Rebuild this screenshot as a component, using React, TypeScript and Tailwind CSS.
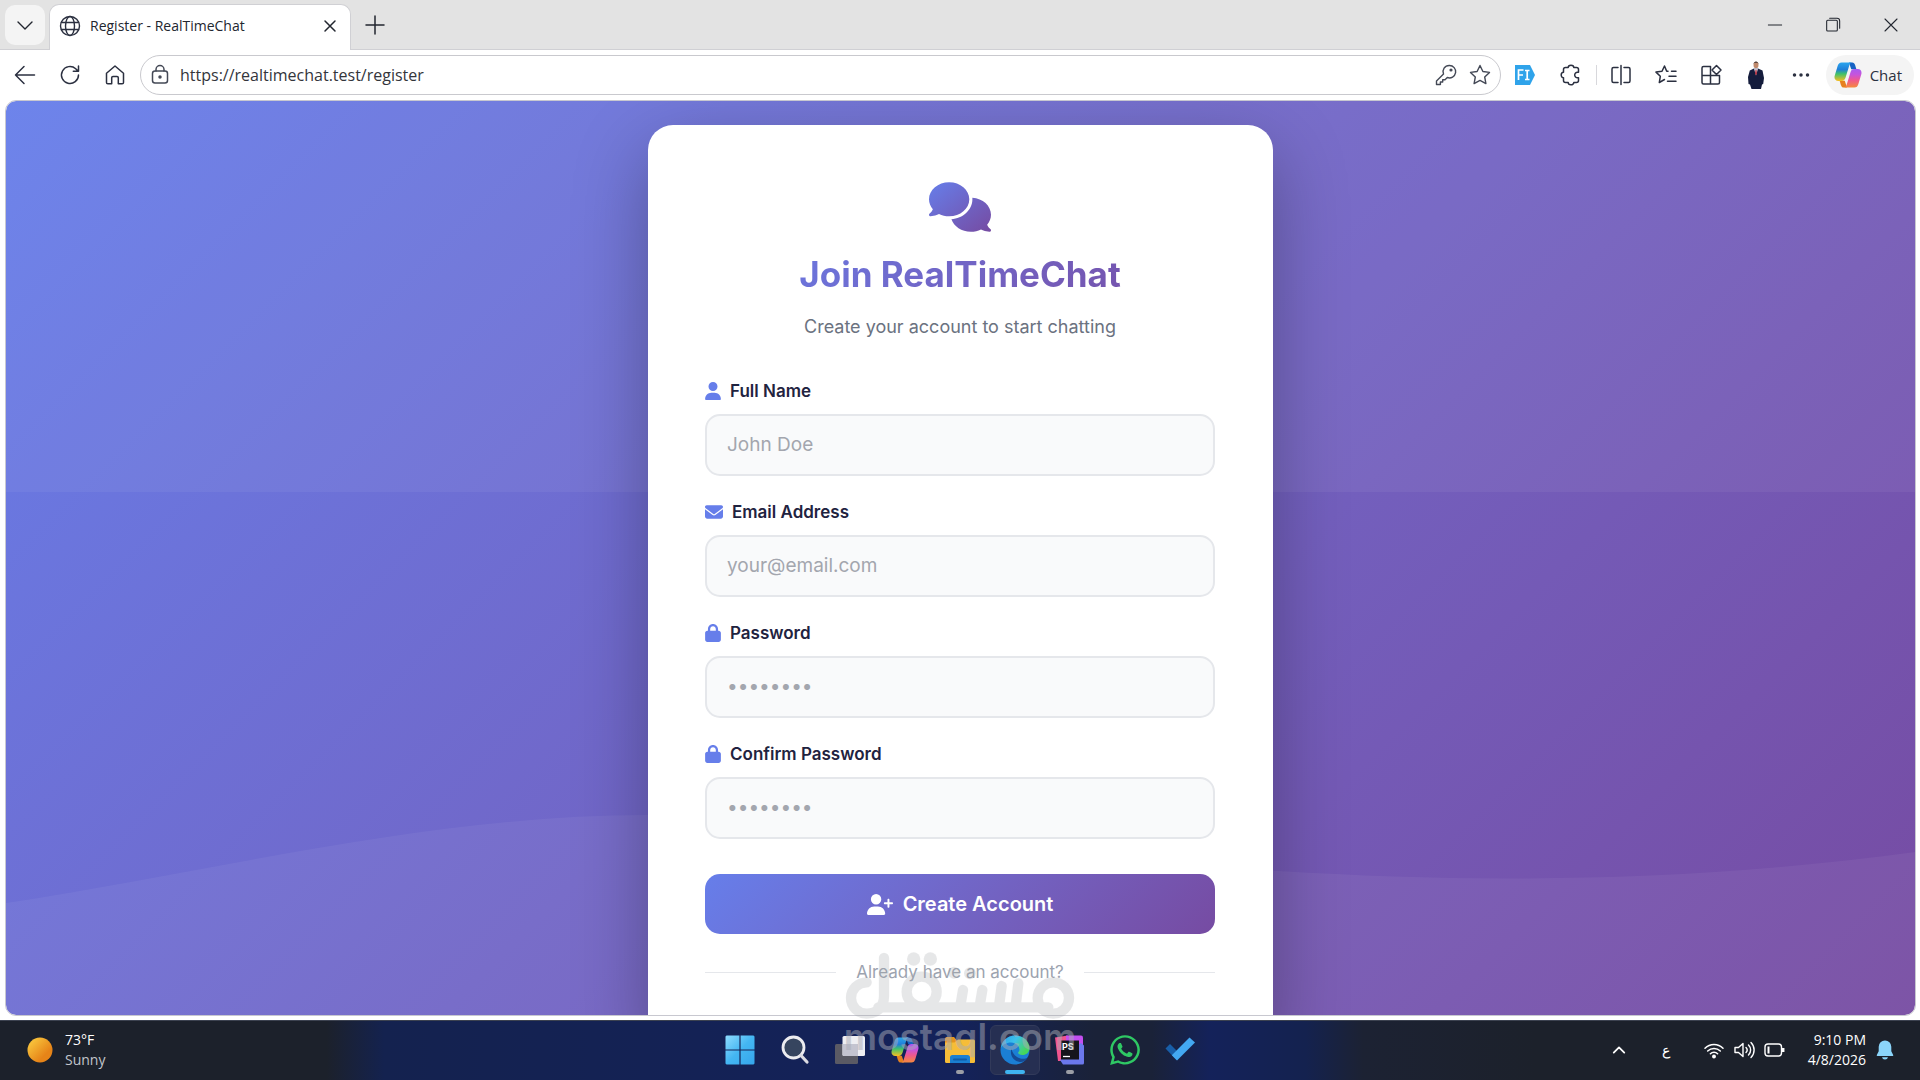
import type { ReactNode } from "react";
import { FaComments, FaUser, FaEnvelope, FaLock, FaUserPlus, FaWhatsapp } from "react-icons/fa6";

const UI = "font-['Open_Sans','Noto_Sans',sans-serif]";

function Stroke({ children, size = 24, width = 1.5, className = "" }: { children: ReactNode; size?: number; width?: number; className?: string }) {
  return (
    <svg width={size} height={size} viewBox="0 0 24 24" fill="none" stroke="currentColor" strokeWidth={width} strokeLinecap="round" strokeLinejoin="round" className={className} aria-hidden="true">
      {children}
    </svg>
  );
}

function CopilotLogo({ size }: { size: number }) {
  return (
    <svg width={size} height={size} viewBox="0 0 28 28" aria-hidden="true">
      <defs>
        <linearGradient id="cp-left" x1="0" y1="0" x2="0" y2="1">
          <stop offset="0" stopColor="#2aa5ee" />
          <stop offset=".38" stopColor="#1f7fd8" />
          <stop offset=".62" stopColor="#3fc26a" />
          <stop offset="1" stopColor="#f5bd22" />
        </linearGradient>
        <linearGradient id="cp-right" x1="0" y1="0" x2="0" y2="1">
          <stop offset="0" stopColor="#a85cf0" />
          <stop offset=".3" stopColor="#c654dc" />
          <stop offset=".6" stopColor="#f0588f" />
          <stop offset="1" stopColor="#f58a3c" />
        </linearGradient>
      </defs>
      <path d="M15 1.5h3.2c1.6 0 2.3 1 2.9 2.6l1.3 4.2h-5.2z" fill="#1763c4" />
      <path d="M13 26.500h-3.200c-1.600 0-2.300-1-2.900-2.600L5.600 19.700h5.200z" fill="#e6801f" />
      <path d="M7.600 1.500h10.200c-1.500.4-2.100 1.500-2.600 3.200l-3.700 12.100c-.7 2.100-1.700 3.100-3.900 3.100H4.300C1.300 19.900-.1 17.600.7 14.700L3.700 4.800c.6-2 1.700-3.300 3.900-3.300z" fill="url(#cp-left)" />
      <path d="M20.400 26.500H10.200c1.500-.4 2.100-1.500 2.600-3.200l3.700-12.100c.7-2.100 1.700-3.100 3.900-3.100h3.300c3 0 4.400 2.300 3.600 5.200l-3 9.900c-.6 2-1.700 3.300-3.900 3.300z" fill="url(#cp-right)" />
    </svg>
  );
}

function IconButton({ label, className = "", children }: { label: string; className?: string; children: ReactNode }) {
  return (
    <button type="button" aria-label={label} className={`flex h-10 w-[45px] shrink-0 items-center justify-center text-[#2b3040] ${className}`}>
      {children}
    </button>
  );
}

function TabStrip() {
  return (
    <div className="flex h-[50px] shrink-0 items-end border-b border-[#d0d0d4] bg-[#e3e3e3]">
      <button type="button" aria-label="Tab actions" className="mb-1 ml-[5px] flex h-10 w-10 items-center justify-center rounded-[10px] bg-[#f4f4f4] text-[#22262f]">
        <Stroke size={24} width={1.4}><path d="M5 9l7 7 7-7" /></Stroke>
      </button>
      <div className="-mb-px ml-1 flex h-[46px] w-[302px] items-center rounded-t-[10px] border border-b-0 border-[#d0d0d4] bg-white px-2 pb-1">
        <Stroke size={24} width={1.4} className="text-[#2b3040]">
          <circle cx="12" cy="12" r="9.500" />
          <ellipse cx="12" cy="12" rx="4.500" ry="9.500" />
          <path d="M3.500 8.500h17M3.500 15.500h17" />
        </Stroke>
        <span className="ml-2 flex-1 text-sm text-[#22262f]">Register - RealTimeChat</span>
        <button type="button" aria-label="Close tab" className="flex h-6 w-6 items-center justify-center text-[#22262f]">
          <Stroke size={20} width={1.8}><path d="M6 6l12 12M18 6L6 18" /></Stroke>
        </button>
      </div>
      <button type="button" aria-label="New tab" className="mb-1 ml-1 flex h-10 w-10 items-center justify-center text-[#22262f]">
        <Stroke size={24} width={1.5}><path d="M12 3v18M3 12h18" /></Stroke>
      </button>
      <div className="flex-1" />
      <div className="flex self-stretch text-[#22262f]">
        <button type="button" aria-label="Minimize" className="flex w-[58px] items-center justify-center"><Stroke size={16} width={1.500}><path d="M2 12h20" /></Stroke></button>
        <button type="button" aria-label="Restore" className="flex w-[58px] items-center justify-center">
          <Stroke size={16} width={1.600}><rect x="2.500" y="5" width="16" height="16" rx="1.500" /><path d="M7 2h11a4 4 0 0 1 4 4v11" /></Stroke>
        </button>
        <button type="button" aria-label="Close" className="flex w-[58px] items-center justify-center"><Stroke size={16} width={1.600}><path d="M3 3l18 18M21 3L3 21" /></Stroke></button>
      </div>
    </div>
  );
}

function Toolbar() {
  return (
    <div className="flex h-[51px] shrink-0 items-center bg-white pr-[6px] pb-px pl-[2px]">
      <IconButton label="Back"><Stroke><path d="M21.500 12H2.500M11 3.500L2.500 12l8.500 8.500" /></Stroke></IconButton>
      <IconButton label="Refresh"><Stroke><path d="M20.500 12a8.500 8.500 0 1 1-2.800-6.300L20 8M20.500 3v5.200h-5.200" /></Stroke></IconButton>
      <IconButton label="Home"><Stroke><path d="M3.500 10.200L12 3l8.500 7.200v9.300a1.300 1.300 0 0 1-1.300 1.300h-3.900v-6a1.300 1.300 0 0 0-1.300-1.300h-4a1.300 1.300 0 0 0-1.300 1.300v6H4.800a1.300 1.300 0 0 1-1.300-1.300z" /></Stroke></IconButton>
      <div className="ml-[3px] flex h-10 flex-1 items-center rounded-full border border-[#c9c9ce] bg-white pl-[7px]">
        <Stroke size={24} className="text-[#444956]">
          <rect x="4.500" y="8" width="15" height="12" rx="2.500" /><path d="M8 8V6.500a4 4 0 0 1 8 0V8" /><circle cx="12" cy="14" r="1" fill="currentColor" />
        </Stroke>
        <input aria-label="Address" defaultValue="https://realtimechat.test/register" className="ml-2 min-w-0 flex-1 bg-transparent text-[16px] text-[#33353b] outline-none" />
        <button type="button" aria-label="Saved passwords" className="flex h-8 w-[34px] items-center justify-center text-[#444956]">
          <Stroke size={24} width={1.400}><path d="M15.300 2.500a6.200 6.200 0 1 1-2 12l-2.300 2.200H8.700V19H6.400v2.500H2.500v-3.400l7-7a6.200 6.200 0 0 1 5.800-8.600z" /><circle cx="17" cy="7" r=".9" fill="currentColor" /></Stroke>
        </button>
        <button type="button" aria-label="Add to favorites" className="mr-[3px] flex h-8 w-[34px] items-center justify-center text-[#444956]">
          <Stroke size={24} width={1.400}><path d="M12 2.500l2.900 6 6.600.9-4.800 4.600 1.200 6.600-5.900-3.200-5.900 3.200 1.200-6.600-4.800-4.600 6.600-.9z" /></Stroke>
        </button>
      </div>
      <IconButton label="Form filler" className="mr-px ml-[2px]">
        <svg width="20" height="20" viewBox="0 0 20 20" aria-hidden="true">
          <path d="M0 0h15l5 10-5 10H0z" fill="#2fa3ea" />
          <path d="M3.500 15V5h5M3.500 10h4.500M10 5.500h4.500M10 14.500h4.500M12.200 5.500v9" stroke="#fff" strokeWidth="1.700" fill="none" />
        </svg>
      </IconButton>
      <IconButton label="Extensions">
        <Stroke><path d="M6.500 4.500H9.200a2.800 2.300 0 0 1 5.600 0H17.500a2 2 0 0 1 2 2v2.700h-1a2.800 2.800 0 1 0 0 5.600h1v2.700a2 2 0 0 1-2 2h-2.700a2.800 2.300 0 0 1-5.600 0H6.500a2 2 0 0 1-2-2v-2.700a2.300 2.800 0 0 1 0-5.600V6.500a2 2 0 0 1 2-2z" /></Stroke>
      </IconButton>
      <div className="mx-[2px] h-5 w-px bg-[#d8d8dc]" />
      <IconButton label="Split screen">
        <Stroke><path d="M12 2.500v19M9 4.500H4.500a1.500 1.500 0 0 0-1.500 1.500v12a1.500 1.500 0 0 0 1.500 1.500H9M15 4.500h4.500A1.500 1.500 0 0 1 21 6v12a1.500 1.500 0 0 1-1.500 1.500H15" /></Stroke>
      </IconButton>
      <IconButton label="Favorites">
        <Stroke><path d="M14 8.200h-1.300L10.500 3 8 8.300l-6 .8 4.300 4.200-1 6.200 5.200-3M22 8.200h-4.500M15 13.200h7M13.500 18.200H22" /></Stroke>
      </IconButton>
      <IconButton label="Apps">
        <Stroke><path d="M11.500 3.500H4.500A1.500 1.500 0 0 0 3 5v14.500A1.500 1.500 0 0 0 4.500 21H19a1.500 1.500 0 0 0 1.500-1.500v-7H3M11.500 3.500V21" /><path d="M17.500 2.500l4.500 4.500-4.500 4.500L13 7z" /></Stroke>
      </IconButton>
      <IconButton label="Profile">
        <svg width="18" height="28" viewBox="0 0 18 28" aria-hidden="true">
          <ellipse cx="9" cy="4" rx="2.500" ry="3.300" fill="#c08a6c" />
          <path d="M6.500 3.500C6.500-.5 11.500-.5 11.500 3.500L10.800 1.800H7.200z" fill="#3a3030" />
          <path d="M7 7.500h4l4.500 2L17 17l-.8 6-1.200.5-1 4.500H4.500L3 23.500 1.500 23 1 16l1.800-6.500z" fill="#141c3c" />
          <path d="M7 7.500h4l-2 7z" fill="#e8ecf4" />
          <path d="M8.500 8.500h1l.5 4-1 2-1-2z" fill="#b03040" />
        </svg>
      </IconButton>
      <IconButton label="Settings and more"><Stroke><g fill="currentColor"><circle cx="5.500" cy="12" r="1" /><circle cx="12" cy="12" r="1" /><circle cx="18.500" cy="12" r="1" /></g></Stroke></IconButton>
      <button type="button" className="ml-[2px] flex h-10 items-center gap-2 rounded-full bg-[#f4f4f4] pr-3 pl-2 text-[15px] text-[#2b3040]">
        <CopilotLogo size={28} />
        Chat
      </button>
    </div>
  );
}

const fields = [
  { id: "name", label: "Full Name", placeholder: "John Doe", type: "text", icon: FaUser, iconWidth: "w-4" },
  { id: "email", label: "Email Address", placeholder: "your@email.com", type: "email", icon: FaEnvelope, iconWidth: "w-[18px]" },
  { id: "password", label: "Password", placeholder: "••••••••", type: "password", icon: FaLock, iconWidth: "w-4" },
  { id: "confirm", label: "Confirm Password", placeholder: "••••••••", type: "password", icon: FaLock, iconWidth: "w-4" },
];

function RegisterCard() {
  return (
    <section className="relative w-[625px] max-w-full shrink-0 self-start rounded-[25px] bg-white pt-[57px] pr-[58px] pb-14 pl-[57px] shadow-[0_25px_75px_rgba(0,0,0,0.3)]">
      <header className="flex flex-col items-center text-center">
        <svg width="0" height="0" className="absolute" aria-hidden="true">
          <linearGradient id="brand" x1="0" y1="0" x2="1" y2="1">
            <stop offset="0" stopColor="#667eea" />
            <stop offset="1" stopColor="#764ba2" />
          </linearGradient>
        </svg>
        <FaComments fill="url(#brand)" className="h-[50px] w-[62px]" aria-hidden="true" />
        <h1 className="mt-[21px] self-stretch bg-linear-135 from-[#667eea] to-[#764ba2] bg-clip-text text-[35px] leading-[42px] font-bold text-transparent">Join RealTimeChat</h1>
        <p className="mt-[18px] text-[18px] leading-[27px] text-[#6b7280]">Create your account to start chatting</p>
      </header>
      <form className="mt-[38px]">
        <div className="flex flex-col gap-[23px]">
          {fields.map(({ id, label, placeholder, type, icon: Icon, iconWidth }) => (
            <div key={id}>
              <label htmlFor={id} className="flex items-center gap-[9px] text-[17px] leading-[26px] font-semibold text-[#1f2340]">
                <Icon className={`h-[18px] text-[#667eea] ${iconWidth}`} aria-hidden="true" />
                {label}
              </label>
              <input id={id} type={type} placeholder={placeholder} className="mt-[10px] h-[62px] w-full rounded-[15px] border-2 border-[#e5e7eb] bg-[#f9fafb] px-5 pb-[2px] text-[19px] text-[#1f2340] outline-none placeholder:text-[#a3a6ae]" />
            </div>
          ))}
        </div>
        <button type="submit" className="mt-[35px] flex h-[60px] w-full items-center justify-center gap-[10px] rounded-[15px] bg-linear-135 from-[#667eea] to-[#764ba2] text-[20px] font-semibold text-white">
          <FaUserPlus className="h-[21px] w-[26px]" aria-hidden="true" />
          Create Account
        </button>
      </form>
      <div className="mt-[25px] flex items-center gap-5 text-[17px] leading-[26px] text-[#9ca3af]">
        <span className="h-px flex-1 bg-[#e5e7eb]" />
        Already have an account?
        <span className="h-px flex-1 bg-[#e5e7eb]" />
      </div>
    </section>
  );
}

function PageView() {
  return (
    <main className="relative mr-[5px] mb-[5px] ml-[6px] flex min-h-0 flex-1 justify-center overflow-hidden rounded-[10px] bg-linear-135 from-[#667eea] to-[#764ba2] pt-6 font-['Inter',sans-serif] outline-1 outline-[#c8c8d0]">
      <svg className="absolute inset-0 h-full w-full" viewBox="0 0 1908 914" preserveAspectRatio="none" aria-hidden="true">
        <path d="M0 0H1908V391H0z" fill="#fff" fillOpacity=".05" />
        <path d="M0 802C210 770 424 714 640 714C850 714 1060 754 1273 770C1470 782 1680 782 1908 751V914H0z" fill="#fff" fillOpacity=".05" />
      </svg>
      <RegisterCard />
    </main>
  );
}

function EdgeLogo() {
  return (
    <svg width="30" height="30" viewBox="0 0 30 30" aria-hidden="true">
      <defs>
        <linearGradient id="edge-top" x1="0" y1="0" x2="1" y2=".5">
          <stop offset="0" stopColor="#2b9fe6" /><stop offset=".5" stopColor="#3cc0ec" /><stop offset="1" stopColor="#45d65a" />
        </linearGradient>
      </defs>
      <circle cx="15" cy="15" r="14.500" fill="#1b7fd4" />
      <path d="M.8 13C2 5.500 8 .5 15 .5c8.500 0 14.500 6 14.500 12.500 0 4.500-3.400 7-7 7-3 0-4.700-1.300-4.400-2.400 1-1 1.500-2 1.300-3.700C19 10.500 15.500 7.500 11 7.500 6.500 7.500 2.500 9.800.8 13z" fill="url(#edge-top)" />
      <path d="M11.500 13.500c-2 5.500 1 12.500 8.500 13.500 3.500 0 6.500-2 8-4.500-3.500 2-8 1.500-11-.5-3.500-2.300-5-5.200-5.500-8.500z" fill="#154a94" />
    </svg>
  );
}

function TaskbarApps() {
  const item = "relative flex h-[50px] w-[50px] items-center justify-center rounded-md";
  return (
    <nav aria-label="Taskbar apps" className="flex gap-[5px]">
      <button type="button" aria-label="Start" className={item}>
        <svg width="30" height="30" viewBox="0 0 30 30" aria-hidden="true">
          <defs><linearGradient id="win" x1="0" y1="0" x2="1" y2="1"><stop offset="0" stopColor="#8fdcff" /><stop offset=".5" stopColor="#44b6f2" /><stop offset="1" stopColor="#35a6ec" /></linearGradient></defs>
          <path d="M1.500.5H14.400V14.400H.5V1.500zM15.600.5h12.900l1 1v12.900H15.600zM.5 15.600h13.900v13.900H1.500l-1-1zM15.600 15.600h13.900v12.900l-1 1H15.600z" fill="url(#win)" />
        </svg>
      </button>
      <button type="button" aria-label="Search" className={item}>
        <svg width="30" height="30" viewBox="0 0 30 30" fill="none" aria-hidden="true">
          <circle cx="13.500" cy="12.500" r="10.500" fill="#36455f" stroke="#ececf0" strokeWidth="2.800" />
          <path d="M21 20.500l6 6.500" stroke="#dcdce2" strokeWidth="3.200" strokeLinecap="round" />
        </svg>
      </button>
      <button type="button" aria-label="Task view" className={item}>
        <svg width="30" height="30" viewBox="0 0 30 30" aria-hidden="true">
          <rect x="0" y="9" width="23" height="20" rx="1.500" fill="#5a5a64" />
          <rect x="7.500" y="1" width="22.500" height="20" rx="1.500" fill="#eeeef2" />
          <path d="M7.500 9H23v12H9a1.500 1.500 0 0 1-1.500-1.500z" fill="#c4c4d0" />
        </svg>
      </button>
      <button type="button" aria-label="Copilot" className={item}><CopilotLogo size={28} /></button>
      <button type="button" aria-label="File Explorer" className={item}>
        <svg width="30" height="30" viewBox="0 0 30 30" aria-hidden="true">
          <path d="M0 4a2 2 0 0 1 2-2h7l3 3.500V12H0z" fill="#e6951e" />
          <path d="M0 7.500h9.500L13 4.500h15.500A1.500 1.500 0 0 1 30 6v20.500a1.500 1.500 0 0 1-1.500 1.500h-27A1.500 1.500 0 0 1 0 26.500z" fill="#f6bd38" />
          <path d="M5 28v-5.500A2.500 2.500 0 0 1 7.500 20h15a2.500 2.500 0 0 1 2.500 2.500V28z" fill="#1a7fd2" />
          <path d="M9 24.500h12" stroke="#0f5ca8" strokeWidth="2" strokeLinecap="round" />
        </svg>
        <span className="absolute bottom-px h-1 w-2 rounded-full bg-[#9b9ea6]" />
      </button>
      <button type="button" aria-label="Edge" className={`${item} border border-[#323a5a] bg-[#262f52]`}>
        <EdgeLogo />
        <span className="absolute bottom-0 h-1 w-5 rounded-full bg-[#3fb4f0]" />
      </button>
      <button type="button" aria-label="PhpStorm" className={item}>
        <svg width="32" height="30" viewBox="0 0 32 30" aria-hidden="true">
          <path d="M1 2.500L14 .5l5 13L7 26H4z" fill="#f0548e" />
          <path d="M12 .5h15a2 2 0 0 1 2 2V20L12 12z" fill="#c44ff0" />
          <path d="M27 8l3 2.500V28a1.500 1.500 0 0 1-1.500 1.500H9L6 25z" fill="#6b78ec" />
          <rect x="7" y="5.500" width="18" height="19" fill="#15151c" />
          <text x="8" y="15" fill="#fff" fontSize="9" fontWeight="700" className="font-['Inter',sans-serif]">PS</text>
          <path d="M9 21.500h7" stroke="#fff" strokeWidth="1.300" />
        </svg>
        <span className="absolute bottom-px h-1 w-2 rounded-full bg-[#9b9ea6]" />
      </button>
      <button type="button" aria-label="WhatsApp" className={item}><FaWhatsapp className="h-[34px] w-[34px] text-[#2fc864]" /></button>
      <button type="button" aria-label="To Do" className={item}>
        <svg width="30" height="30" viewBox="0 0 30 30" aria-hidden="true">
          <path d="M.5 13.500L5 9l10.500 10.500L11.500 25z" fill="#185ea8" />
          <path d="M6.800 20.200L24.500 2.500 30 7.500 12 25.500z" fill="#43a8f2" />
        </svg>
      </button>
    </nav>
  );
}

function Taskbar() {
  return (
    <footer className="grid h-[60px] shrink-0 grid-cols-[1fr_auto_1fr] items-center border-t border-[#3c4250] bg-[linear-gradient(90deg,#1c212b_0%,#1c212b_17%,#14224f_20%,#14225a_50%,#1a2238_57%,#1a2238_60%,#14225a_63%,#14224f_68%,#1c2233_71%,#1c212b_80%)] pb-px text-[14px] leading-5 text-white">
      <div className="flex items-center gap-3 pl-[27px]">
        <svg width="26" height="26" viewBox="0 0 26 26" aria-hidden="true">
          <defs><linearGradient id="sun" x1="0" y1="0" x2="1" y2="1"><stop offset=".2" stopColor="#f6bd38" /><stop offset=".7" stopColor="#e68418" /></linearGradient></defs>
          <circle cx="13" cy="13" r="12.500" fill="url(#sun)" />
        </svg>
        <div>
          <div>73°F</div>
          <div className="text-[#c2c5cc]">Sunny</div>
        </div>
      </div>
      <TaskbarApps />
      <div className="flex items-center justify-end pr-[26px]">
        <Stroke size={18} width={2.400}><path d="M5 15.500l7-7 7 7" /></Stroke>
        <span className="ml-[26px] w-6 text-center text-[14px]">ع</span>
        <svg width="20" height="17" viewBox="0 0 20 17" fill="none" stroke="#fff" strokeWidth="1.500" strokeLinecap="round" className="ml-[26px]" aria-hidden="true">
          <path d="M1 6.200a12.700 12.700 0 0 1 18 0M3.700 9a8.900 8.900 0 0 1 12.600 0M6.400 11.700a5 5 0 0 1 7.200 0" /><circle cx="10" cy="14.500" r="1.200" fill="#fff" />
        </svg>
        <svg width="21" height="18" viewBox="0 0 21 18" fill="none" stroke="#fff" strokeWidth="1.400" strokeLinecap="round" strokeLinejoin="round" className="ml-[10px]" aria-hidden="true">
          <path d="M1 6.500v5h3.500L9 15.500v-13L4.500 6.500zM12 6.500a3.600 3.600 0 0 1 0 5M14.500 4a7 7 0 0 1 0 10M17 1.500a10.600 10.600 0 0 1 0 15" />
        </svg>
        <svg width="21" height="14" viewBox="0 0 21 14" fill="none" stroke="#fff" strokeWidth="1.400" className="ml-[9px]" aria-hidden="true">
          <rect x="1" y="1" width="16.500" height="12" rx="3" /><path d="M19.200 5v4" strokeWidth="2.500" /><rect x="3.500" y="3.500" width="2" height="7" fill="#fff" stroke="none" />
        </svg>
        <div className="ml-[23px] text-right">
          <div>9:10 PM</div>
          <div>4/8/2026</div>
        </div>
        <svg width="18" height="20" viewBox="0 0 18 20" fill="#8bd5fa" className="ml-[10px]" aria-hidden="true">
          <path d="M9 .5a6.200 6.200 0 0 1 6.300 6.200v4.600l1.900 3.700a.7.7 0 0 1-.6 1H1.400a.7.7 0 0 1-.6-1l1.900-3.700V6.700A6.200 6.200 0 0 1 9 .5zM6 17.200h6A3 3 0 0 1 9 19.500a3 3 0 0 1-3-2.300z" />
        </svg>
      </div>
    </footer>
  );
}

function Watermark() {
  return (
    <div className="pointer-events-none absolute bottom-0 left-1/2 flex w-[250px] -translate-x-1/2 flex-col items-center">
      <svg width="250" height="80" viewBox="0 0 750 240" aria-hidden="true" className="opacity-25">
        <g fill="none" stroke="#a0a3a8" strokeWidth="31" strokeLinecap="round">
          <path d="M95 127a47 47 0 1 0 0 94c30 0 52-20 52-52V54M130 202H640" strokeLinejoin="round" />
          <circle cx="260" cy="155" r="45" />
          <path d="M384 150l-8 48M442 150l-8 48M500 138l-8 60M550 130l-8 68" />
          <circle cx="655" cy="174" r="47" />
        </g>
        <g fill="#a0a3a8">
          <circle cx="236" cy="57" r="20" /><circle cx="286" cy="57" r="20" />
          <circle cx="357" cy="98" r="18" /><circle cx="405" cy="100" r="18" />
        </g>
      </svg>
      <div className="h-[60px] font-['Inter',sans-serif] text-[37px] leading-[34px] font-semibold text-[#a9abb5]/50">mostaql.com</div>
    </div>
  );
}

export default function App() {
  return (
    <div className={`relative flex h-screen flex-col overflow-hidden bg-white ${UI}`}>
      <TabStrip />
      <Toolbar />
      <PageView />
      <Taskbar />
      <Watermark />
    </div>
  );
}
